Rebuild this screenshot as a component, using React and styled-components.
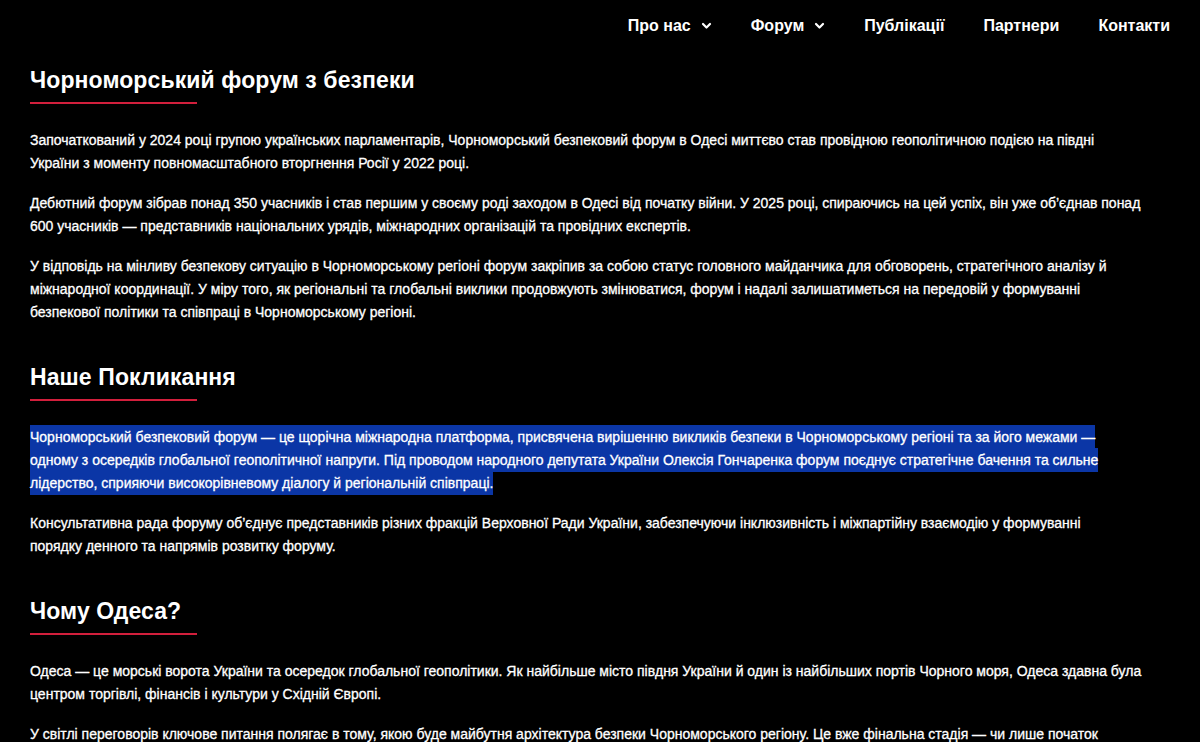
import React from 'react';
import styled, { createGlobalStyle } from 'styled-components';

const GlobalStyle = createGlobalStyle`
  html, body {
    margin: 0;
    padding: 0;
    background: #000;
  }
  body {
    font-family: "Liberation Sans", Arial, Helvetica, sans-serif;
    color: #fff;
    -webkit-font-smoothing: antialiased;
  }
`;

const navItems = [
  { label: 'Про нас', dropdown: true },
  { label: 'Форум', dropdown: true },
  { label: 'Публікації' },
  { label: 'Партнери' },
  { label: 'Контакти' },
];

const Page = styled.div`
  min-height: 100vh;
  background: #000;
`;

const Header = styled.header`
  display: flex;
  justify-content: flex-end;
  align-items: center;
  height: 50px;
  padding: 2px 30px 0 30px;
  box-sizing: border-box;
`;

const Nav = styled.nav`
  display: flex;
  align-items: center;
  gap: 39px;
`;

const NavLink = styled.a`
  display: flex;
  align-items: center;
  gap: 10px;
  color: #fff;
  font-size: 16px;
  font-weight: 700;
  text-decoration: none;
  cursor: pointer;
`;

const Chevron = () => (
  <svg width="11" height="8" viewBox="0 0 11 8" fill="none">
    <path d="M2 2l3.5 3.5L9 2" stroke="#fff" strokeWidth="2.2" strokeLinecap="round" strokeLinejoin="round" />
  </svg>
);

const Main = styled.main`
  padding: 17px 57px 0 30px;
`;

const Section = styled.section`
  margin-bottom: 40px;
`;

const SectionTitle = styled.h2`
  margin: 0 0 25px;
  font-size: 23px;
  line-height: 26px;
  font-weight: 700;
  letter-spacing: 0.1px;

  &::after {
    content: '';
    display: block;
    width: 167px;
    height: 2px;
    margin-top: 9px;
    background: #d21f3c;
  }
`;

const Paragraph = styled.p`
  margin: 0 0 17px;
  font-size: 14px;
  line-height: 23px;
  -webkit-text-stroke: 0.3px #fff;
`;

const Highlight = styled.span`
  background: #0b36a6;
  padding: 4px 0;
  -webkit-box-decoration-break: clone;
  box-decoration-break: clone;
`;

const App = () => (
  <Page>
    <GlobalStyle />
    <Header>
      <Nav>
        {navItems.map((item) => (
          <NavLink key={item.label}>
            {item.label}
            {item.dropdown && <Chevron />}
          </NavLink>
        ))}
      </Nav>
    </Header>
    <Main>
      <Section>
        <SectionTitle as="h1">Чорноморський форум з безпеки</SectionTitle>
        <Paragraph>
          Започаткований у 2024 році групою українських парламентарів, Чорноморський безпековий форум в Одесі миттєво став провідною геополітичною подією на півдні України з моменту повномасштабного вторгнення Росії у 2022 році.
        </Paragraph>
        <Paragraph>
          Дебютний форум зібрав понад 350 учасників і став першим у своєму роді заходом в Одесі від початку війни. У 2025 році, спираючись на цей успіх, він уже об’єднав понад 600 учасників — представників національних урядів, міжнародних організацій та провідних експертів.
        </Paragraph>
        <Paragraph>
          У відповідь на мінливу безпекову ситуацію в Чорноморському регіоні форум закріпив за собою статус головного майданчика для обговорень, стратегічного аналізу й міжнародної координації. У міру того, як регіональні та глобальні виклики продовжують змінюватися, форум і надалі залишатиметься на передовій у формуванні безпекової політики та співпраці в Чорноморському регіоні.
        </Paragraph>
      </Section>
      <Section>
        <SectionTitle>Наше Покликання</SectionTitle>
        <Paragraph>
          <Highlight>
            Чорноморський безпековий форум — це щорічна міжнародна платформа, присвячена вирішенню викликів безпеки в Чорноморському регіоні та за його межами — одному з осередків глобальної геополітичної напруги. Під проводом народного депутата України Олексія Гончаренка форум поєднує стратегічне бачення та сильне лідерство, сприяючи високорівневому діалогу й регіональній співпраці.
          </Highlight>
        </Paragraph>
        <Paragraph>
          Консультативна рада форуму об’єднує представників різних фракцій Верховної Ради України, забезпечуючи інклюзивність і міжпартійну взаємодію у формуванні порядку{'\u00a0'}денного та напрямів розвитку форуму.
        </Paragraph>
      </Section>
      <Section>
        <SectionTitle>Чому Одеса?</SectionTitle>
        <Paragraph>
          Одеса — це морські ворота України та осередок глобальної геополітики. Як найбільше місто півдня України й один із найбільших портів Чорного моря, Одеса здавна була центром торгівлі, фінансів і культури у Східній Європі.
        </Paragraph>
        <Paragraph>
          У світлі переговорів ключове питання полягає в тому, якою буде майбутня архітектура безпеки Чорноморського регіону. Це вже фінальна стадія — чи лише початок нового етапу протистояння в регіоні?
        </Paragraph>
      </Section>
    </Main>
  </Page>
);

export default App;
